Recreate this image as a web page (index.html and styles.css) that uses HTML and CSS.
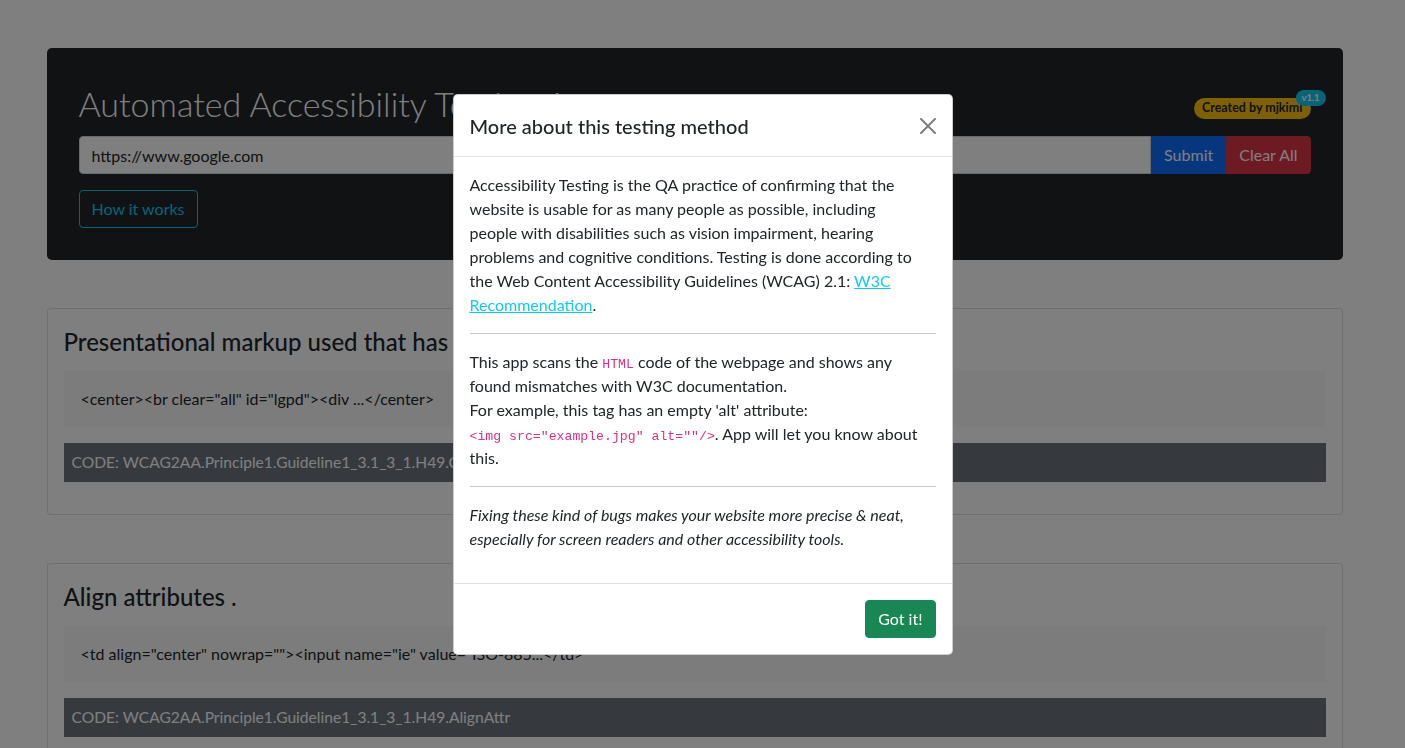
FILE: index.html
```html
<!DOCTYPE html>
<html lang="en">
<head>
<meta charset="utf-8">
<title>Automated Accessibility Testing App</title>
<link rel="stylesheet" href="styles.css">
</head>
<body class="modal-open">
<div class="container">
  <header class="jumbo">
    <div class="jumbo-head">
      <h1 class="jumbo-title">Automated Accessibility Testing App</h1>
      <span class="badge badge-warning">Created by mjkimi<span class="badge badge-info badge-corner">v1.1</span></span>
    </div>
    <form class="input-group">
      <input class="form-control" type="text" value="https://www.google.com">
      <button type="button" class="btn btn-primary">Submit</button>
      <button type="button" class="btn btn-danger btn-last">Clear All</button>
    </form>
    <button type="button" class="btn btn-outline-info how">How it works</button>
  </header>

  <section class="card">
    <h4 class="card-title">Presentational markup used that has become obsolete in HTML5.</h4>
    <div class="snippet">&lt;center&gt;&lt;br clear="all" id="lgpd"&gt;&lt;div ...&lt;/center&gt;</div>
    <div class="codebar">CODE: WCAG2AA.Principle1.Guideline1_3.1_3_1.H49.Center</div>
  </section>

  <section class="card">
    <h4 class="card-title">Align attributes .</h4>
    <div class="snippet">&lt;td align="center" nowrap=""&gt;&lt;input name="ie" value="ISO-885...&lt;/td&gt;</div>
    <div class="codebar">CODE: WCAG2AA.Principle1.Guideline1_3.1_3_1.H49.AlignAttr</div>
  </section>
</div>

<div class="backdrop"></div>
<div class="modal">
  <div class="modal-dialog">
    <div class="modal-header">
      <h5 class="modal-title">More about this testing method</h5>
      <button type="button" class="btn-close" aria-label="Close">
        <svg viewBox="0 0 16 16" width="16" height="16"><path d="M.293.293a1 1 0 011.414 0L8 6.586 14.293.293a1 1 0 111.414 1.414L9.414 8l6.293 6.293a1 1 0 01-1.414 1.414L8 9.414l-6.293 6.293a1 1 0 01-1.414-1.414L6.586 8 .293 1.707a1 1 0 010-1.414z"/></svg>
      </button>
    </div>
    <div class="modal-body">
      <p>Accessibility Testing is the QA practice of confirming that the website is usable for as many people as possible, including people with disabilities such as vision impairment, hearing problems and cognitive conditions. Testing is done according to the Web Content Accessibility Guidelines (WCAG) 2.1: <a href="#" class="link-info">W3C Recommendation</a>.</p>
      <hr>
      <p>This app scans the <code>HTML</code> code of the webpage and shows any found mismatches with W3C documentation.<br>For example, this tag has an empty 'alt' attribute: <code class="nowrap">&lt;img src="example.jpg" alt=""/&gt;</code>. App will let you know about this.</p>
      <hr>
      <p class="note">Fixing these kind of bugs makes your website more precise &amp; neat, especially for screen readers and other accessibility tools.</p>
    </div>
    <div class="modal-footer">
      <button type="button" class="btn btn-success">Got it!</button>
    </div>
  </div>
</div>
</body>
</html>
```

FILE: styles.css
```css
* { box-sizing: border-box; }
html, body { height: 100%; }
body {
  margin: 0;
  padding-right: 16px;
  overflow: hidden;
  background: #fff;
  color: #212529;
  font-family: "Lato", "Noto Sans", sans-serif;
  font-size: 16px;
  line-height: 1.5;
}
.container {
  max-width: 1320px;
  margin: 0 auto;
  padding: 0 12px;
}
.jumbo {
  margin-top: 48px;
  background: #212529;
  border-radius: 4.8px;
  padding: 32px;
}
.jumbo-head {
  display: flex;
  justify-content: space-between;
  align-items: flex-start;
}
.jumbo-title {
  margin: 0 0 8px;
  font-size: 34px;
  line-height: 48px;
  font-weight: 300;
  color: #fff;
}
.badge {
  display: inline-block;
  padding: .35em .65em;
  font-size: 12.5px;
  font-weight: 700;
  line-height: 1;
  white-space: nowrap;
  border-radius: 50rem;
}
.badge-warning {
  position: relative;
  margin-top: 18px;
  background: #ffc107;
  color: #212529;
}
.badge-info { background: #0dcaf0; color: #fff; }
.badge-corner {
  position: absolute;
  top: 0;
  left: 100%;
  transform: translate(-50%, -50%);
  font-size: .75em;
}
.input-group { display: flex; }
.form-control {
  flex: 1;
  min-width: 0;
  height: 38px;
  padding: 6px 12px;
  font: inherit;
  color: #212529;
  background: #fff;
  border: 1px solid #ced4da;
  border-radius: 4px 0 0 4px;
  outline: none;
}
.btn {
  display: inline-block;
  font: inherit;
  line-height: 1.5;
  padding: 6px 12px;
  border: 1px solid transparent;
  border-radius: 4px;
  cursor: pointer;
}
.btn-primary { background: #0d6efd; border-color: #0d6efd; color: #fff; border-radius: 0; }
.btn-danger { background: #dc3545; border-color: #dc3545; color: #fff; }
.btn-last { border-radius: 0 4px 4px 0; }
.btn-outline-info { background: transparent; border-color: #0dcaf0; color: #0dcaf0; }
.how { margin-top: 16px; }
.btn-success { background: #198754; border-color: #198754; color: #fff; }

.card {
  margin-top: 48px;
  background: #fff;
  border: 1px solid rgba(0,0,0,.125);
  border-radius: 4px;
  padding: 16px;
}
.card-title {
  margin: 0 0 14px;
  padding-top: 3px;
  font-size: 24px;
  font-weight: 500;
  line-height: 1.2;
}
.snippet {
  background: #f8f9fa;
  padding: 16px 17px;
  line-height: 24px;
}
.codebar {
  margin: 16px 0;
  background: #6c757d;
  color: #fff;
  padding: 8px;
  line-height: 23px;
  font-size: 15.6px;
}

.backdrop {
  position: fixed;
  inset: 0;
  background: rgba(0,0,0,.5);
}
.modal {
  position: fixed;
  inset: 0;
  display: flex;
  align-items: center;
  justify-content: center;
}
.modal-dialog {
  width: 500px;
  background: #fff;
  border: 1px solid rgba(0,0,0,.2);
  border-radius: 4.8px;
  display: flex;
  flex-direction: column;
}
.modal-header {
  display: flex;
  align-items: center;
  justify-content: space-between;
  padding: 16px 16px 15px;
  border-bottom: 1px solid #dee2e6;
}
.modal-title {
  margin: 0;
  font-size: 20px;
  font-weight: 500;
  line-height: 1.5;
}
.btn-close {
  width: 24px;
  height: 24px;
  padding: 4px;
  margin-right: -4px;
  background: transparent;
  border: 0;
  opacity: .5;
  display: flex;
  align-items: center;
  justify-content: center;
}
.btn-close svg { width: 16px; height: 16px; fill: #000; }
.modal-body { padding: 16px; }
.modal-body p { margin: 0 0 16px; max-width: 455px; }
.modal-body .note { font-style: italic; max-width: none; }
.modal-body hr {
  margin: 16px 0;
  border: 0;
  border-top: 1px solid #212529;
  opacity: .25;
}
.link-info { color: #0dcaf0; }
code {
  font-family: "Liberation Mono", "DejaVu Sans Mono", monospace;
  font-size: 13.2px;
  line-height: 1;
  color: #d63384;
}
.nowrap { white-space: nowrap; }
.modal-footer {
  display: flex;
  justify-content: flex-end;
  padding: 12px;
  border-top: 1px solid #dee2e6;
}
.modal-footer .btn { margin: 4px; }
```
